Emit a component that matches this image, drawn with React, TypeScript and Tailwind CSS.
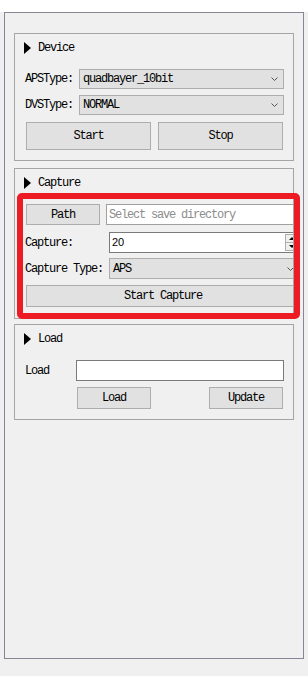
import React from 'react'

const font = "font-['Liberation_Mono',monospace] text-[12px] tracking-[-1.2px] leading-none"
const mono = `${font} text-black`

function GroupTitle({ text }: { text: string }) {
  return (
    <div className="flex h-[27px] items-center pl-[9px]">
      <span className="h-0 w-0 border-y-[6px] border-l-[7px] border-y-transparent border-l-black" />
      <span className={`ml-[7px] ${mono}`}>{text}</span>
    </div>
  )
}

function Chevron({ className }: { className: string }) {
  return (
    <svg className={className} width="7" height="4" viewBox="0 0 7 4" fill="none">
      <path d="M0.5 0.5 L3.5 3.5 L6.5 0.5" stroke="#555" strokeWidth="1" />
    </svg>
  )
}

function Combo({ value, className, chevronClass }: { value: string; className: string; chevronClass: string }) {
  return (
    <div className={`relative flex items-center border border-[#adadad] bg-[#e1e1e1] pl-[3px] ${className}`}>
      <span className={mono}>{value}</span>
      <Chevron className={`absolute top-1/2 -translate-y-1/2 ${chevronClass}`} />
    </div>
  )
}

function Button({ label, className }: { label: string; className: string }) {
  return (
    <div className={`flex items-center justify-center border border-[#adadad] bg-[#e1e1e1] ${mono} ${className}`}>
      {label}
    </div>
  )
}

export default function App() {
  return (
    <div className="relative h-[676px] w-[308px] overflow-hidden bg-[#f0f0f0]">
      <div className="h-[12px] bg-white" />

      <div className="ml-[4px] h-[647px] w-[300px] border border-[#868696] px-[9px] pt-[20px]">
        {/* Device */}
        <div className="h-[128px] border border-[#a5a5a5]">
          <GroupTitle text="Device" />
          <div className="mt-[8px] flex flex-col pl-[10px] pr-[9px]">
            <div className="flex h-[20px] items-center">
              <span className={`w-[54px] ${mono}`}>APSType:</span>
              <Combo value="quadbayer_10bit" className="h-[20px] w-[205px]" chevronClass="right-[5px]" />
            </div>
            <div className="mt-[6px] flex h-[20px] items-center">
              <span className={`w-[54px] ${mono}`}>DVSType:</span>
              <Combo value="NORMAL" className="h-[20px] w-[205px]" chevronClass="right-[5px]" />
            </div>
            <div className="mt-[7px] flex gap-[7px] pl-[1px]">
              <Button label="Start" className="h-[28px] w-[125px]" />
              <Button label="Stop" className="h-[28px] w-[125px]" />
            </div>
          </div>
        </div>

        {/* Capture */}
        <div className="mt-[7px] h-[151px] border border-[#a5a5a5]">
          <GroupTitle text="Capture" />
          <div className="mt-[8px] w-[278px] overflow-hidden">
            <div className="flex w-[285px] flex-col pl-[10px]">
              <div className="flex h-[21px]">
                <Button label="Path" className="ml-[1px] h-[21px] w-[74px]" />
                <div className="ml-[6px] flex flex-1 items-center border border-[#a0a0a0] bg-white pl-[2px]">
                  <span className={`${font} text-[#8c8c8c]`}>Select save directory</span>
                </div>
              </div>
              <div className="mt-[7px] flex h-[21px] items-center">
                <span className={`w-[84px] ${mono}`}>Capture:</span>
                <div className="relative flex h-[21px] flex-1 items-center border border-[#7a7a7a] bg-white pl-[2px]">
                  <span className="font-['Liberation_Sans',sans-serif] text-[11px] leading-none text-black">20</span>
                  <div className="absolute right-[1px] top-[1px] bottom-[1px] flex w-[13px] flex-col">
                    <div className="flex flex-1 items-center justify-center border border-[#adadad] bg-[#f0f0f0]">
                      <span className="h-0 w-0 border-x-[3px] border-b-[3px] border-x-transparent border-b-black" />
                    </div>
                    <div className="flex flex-1 items-center justify-center border border-t-0 border-[#adadad] bg-[#f0f0f0]">
                      <span className="h-0 w-0 border-x-[3px] border-t-[3px] border-x-transparent border-t-black" />
                    </div>
                  </div>
                </div>
              </div>
              <div className="mt-[5px] flex h-[21px] items-center">
                <span className={`w-[84px] ${mono}`}>Capture Type:</span>
                <Combo value="APS" className="h-[21px] flex-1" chevronClass="right-[5px]" />
              </div>
              <Button label="Start Capture" className="ml-[1px] mt-[6px] h-[22px]" />
            </div>
          </div>
        </div>

        {/* Load */}
        <div className="mt-[5px] h-[96px] border border-[#a5a5a5]">
          <GroupTitle text="Load" />
          <div className="mt-[8px] flex flex-col pl-[10px] pr-[9px]">
            <div className="flex h-[21px] items-center">
              <span className={`w-[51px] ${mono}`}>Load</span>
              <div className="h-[21px] w-[208px] border border-[#7a7a7a] bg-white" />
            </div>
            <div className="mt-[6px] flex w-[258px] justify-between pl-[52px]">
              <Button label="Load" className="h-[22px] w-[74px]" />
              <Button label="Update" className="h-[22px] w-[74px]" />
            </div>
          </div>
        </div>
      </div>

      {/* annotation */}
      <div className="absolute left-[17px] top-[193px] h-[126px] w-[283px] rounded-[5px] border-[6px] border-[#ed1c24]" />
    </div>
  )
}
